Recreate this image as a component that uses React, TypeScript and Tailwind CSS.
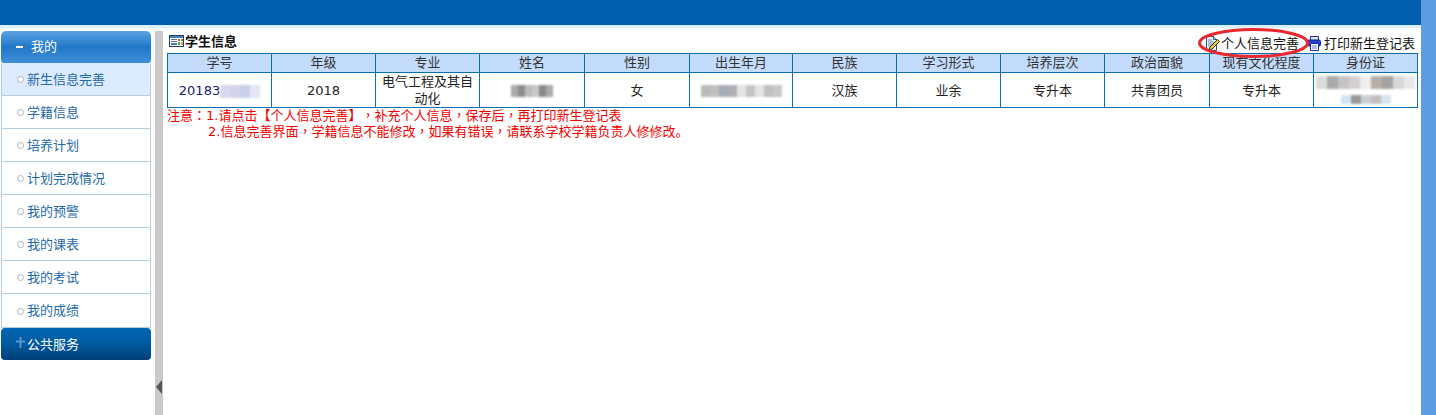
const menu = ["新生信息完善", "学籍信息", "培养计划", "计划完成情况", "我的预警", "我的课表", "我的考试", "我的成绩"];

const headers = ["学号", "年级", "专业", "姓名", "性别", "出生年月", "民族", "学习形式", "培养层次", "政治面貌", "现有文化程度", "身份证"];

const colWidths = [104, 104, 104, 105, 105, 103, 104, 104, 104, 105, 104, 104];

// pixelated bits of the screenshot, one string of colours per row
function Mosaic({ colors, size = 8, height = 13 }: { colors: string[]; size?: number; height?: number }) {
  return (
    <span className="inline-flex align-middle blur-[1px]">
      {colors.map((c, i) => (
        <span key={i} style={{ width: size, height, background: c }} />
      ))}
    </span>
  );
}

// the page's font centres ， and ： in their cell
function Notice({ text }: { text: string }) {
  return (
    <>
      {text.split(/([，：])/).map((part, i) =>
        part === "，" || part === "：" ? (
          <span key={i} className="font-['Noto_Sans_CJK_TC']">{part}</span>
        ) : (
          part
        ),
      )}
    </>
  );
}

function TableIcon() {
  return (
    <svg width="15" height="12" viewBox="0 0 15 12" className="shrink-0">
      <rect x="0.5" y="0.5" width="14" height="11" fill="#fff" stroke="#1f3f66" />
      <rect x="1" y="1" width="13" height="2" fill="#4a7fb8" />
      <rect x="2" y="4" width="6" height="1" fill="#4f78a8" />
      <rect x="2" y="6" width="6" height="1" fill="#4f78a8" />
      <rect x="2" y="8" width="6" height="2" fill="#4f78a8" />
      <rect x="9" y="4" width="2" height="2" fill="#d9483b" />
      <rect x="12" y="4" width="2" height="2" fill="#3fa34d" />
      <rect x="9" y="7" width="2" height="3" fill="#3fa34d" />
      <rect x="12" y="7" width="2" height="3" fill="#e0b030" />
    </svg>
  );
}

function EditIcon() {
  return (
    <svg width="15" height="15" viewBox="0 0 15 15" className="shrink-0">
      <path d="M1.500 0.500h7l3 3v11h-10z" fill="#eef4fb" stroke="#34506f" />
      <path d="M8.500 0.500v3h3" fill="#bcd2e8" stroke="#34506f" />
      <path d="M3 4h4M3 6h6M3 8h5M3 10h3" stroke="#5f86ad" />
      <path d="M12.500 3.500l2 2-7.500 7.500-3 1 1-3z" fill="#f4c62e" stroke="#1f1f1f" strokeWidth="0.9" />
    </svg>
  );
}

function PrintIcon() {
  return (
    <svg width="14" height="15" viewBox="0 0 14 15" className="shrink-0">
      <path d="M3.500 0.500h8v4h-8z" fill="#dfe8ff" stroke="#1a2fb0" />
      <rect x="0.5" y="4" width="13" height="6" rx="1.500" fill="#2440d0" stroke="#12208c" />
      <path d="M3.500 7.500h8v7h-8z" fill="#fff" stroke="#1a2fb0" />
      <path d="M5 10h5M5 12h5" stroke="#5f78c8" />
    </svg>
  );
}

export default function App() {
  return (
    <div
      className="flex h-[415px] w-[1436px] overflow-hidden bg-white text-[13px] text-[#222] [text-spacing-trim:space-all]"
      style={{ fontFamily: '"DejaVu Sans", "Noto Sans CJK SC", sans-serif' }}
    >
      <div className="flex w-[1421px] flex-col">
        <div className="h-[25px] bg-[#005eac]" />
        <div className="h-[3px] bg-[#d9f1ff]" />

        <div className="flex flex-1">
          {/* left menu */}
          <div className="mt-[3px] ml-px w-[150px]">
            <div className="flex h-[32px] items-center rounded-t-[5px] rounded-b-[3px] bg-gradient-to-b from-[#5aa2e2] via-[#1f78c8] to-[#3f8fd8] pl-[15px] text-white">
              <span className="h-[2px] w-[7px] bg-white" />
              <span className="ml-[8px]">我的</span>
            </div>
            <div className="border-x border-b border-[#b4cde4]">
              {menu.map((item, i) => (
                <div
                  key={item}
                  className={`flex h-[33px] items-center border-b border-[#b4cde4] pt-px pl-[15px] text-[#1f6aa8] last:border-b-0 ${
                    i === 0 ? "bg-[#dcebfd]" : "bg-white"
                  }`}
                >
                  <span className="mr-[3px] size-[7px] rounded-full border border-[#aab4bc] bg-white" />
                  {item}
                </div>
              ))}
            </div>
            <div className="flex h-[32px] items-center rounded-[4px] bg-gradient-to-b from-[#0066b4] via-[#005a9f] to-[#003f78] pt-px pl-[15px] text-white">
              <svg width="9" height="11" viewBox="0 0 9 11" className="mb-[5px] shrink-0">
                <path d="M3.500 0h2v3.500H9v2H5.500V11h-2V5.500H0v-2h3.500z" fill="#5d94d0" />
              </svg>
              <span className="ml-[2px]">公共服务</span>
            </div>
          </div>

          {/* splitter */}
          <div className="mt-[3px] ml-[4px] flex w-[8px] items-end bg-[#c9c9c9] pb-[21px]">
            <span className="ml-px h-0 w-0 border-y-[7px] border-r-[6px] border-y-transparent border-r-[#555]" />
          </div>

          {/* content */}
          <div className="relative ml-[4px] w-[1251px]">
            <div className="flex h-[25px] items-end justify-between">
              <div className="mb-[2px] flex items-center gap-px pl-[2px] font-bold text-[#111]">
                <TableIcon />
                <span>学生信息</span>
              </div>
              <div className="flex items-center pr-[3px] text-[#111]">
                <EditIcon />
                <span className="ml-px">个人信息完善</span>
                <span className="ml-[8px]"><PrintIcon /></span>
                <span className="ml-[3px]">打印新生登记表</span>
              </div>
            </div>

            <table className="w-[1250px] table-fixed border-collapse border border-[#0a70ad] text-center">
              <colgroup>
                {colWidths.map((w, i) => (
                  <col key={i} style={{ width: w }} />
                ))}
              </colgroup>
              <thead>
                <tr className="h-[19px] bg-[#c3dcfb] leading-[18px] text-[#333]">
                  {headers.map((h) => (
                    <th key={h} className="border border-[#0a70ad] p-0 font-normal">{h}</th>
                  ))}
                </tr>
              </thead>
              <tbody>
                <tr className="h-[33px] leading-[17px]">
                  <td className="border border-[#0a70ad] p-0">
                    <span className="text-[#1a1a70]">20183</span>
                    <Mosaic colors={["#d8d8ee", "#d4d4ea", "#c6d0e8", "#e6e6f4"]} size={10} />
                  </td>
                  <td className="border border-[#0a70ad] p-0">2018</td>
                  <td className="border border-[#0a70ad] p-0 px-1">电气工程及其自动化</td>
                  <td className="border border-[#0a70ad] p-0">
                    <Mosaic colors={["#aaa", "#8d8d8d", "#bbb", "#c8c8c8", "#888", "#aaa"]} size={7} height={12} />
                  </td>
                  <td className="border border-[#0a70ad] p-0">女</td>
                  <td className="border border-[#0a70ad] p-0">
                    <Mosaic colors={["#bbb", "#c0c0c0", "#a8acb8", "#b0b0b0", "#e4e4e4", "#c4c4c4", "#e4e4e4", "#c0c0c0", "#c8c8c8"]} size={9} height={12} />
                  </td>
                  <td className="border border-[#0a70ad] p-0">汉族</td>
                  <td className="border border-[#0a70ad] p-0">业余</td>
                  <td className="border border-[#0a70ad] p-0">专升本</td>
                  <td className="border border-[#0a70ad] p-0">共青团员</td>
                  <td className="border border-[#0a70ad] p-0">专升本</td>
                  <td className="border border-[#0a70ad] p-0">
                    <div className="flex flex-col items-center gap-[6px]">
                      <Mosaic colors={["#dcdcdc", "#aaa", "#c4c4c4", "#d4d0d0", "#eee", "#b4b0a8", "#a4a4a4", "#d8d8d8", "#e8e8e8"]} size={11} height={13} />
                      <Mosaic colors={["#d4e4f0", "#999", "#c8d0d4", "#c0c0c0", "#d8e4ec"]} size={10} height={9} />
                    </div>
                  </td>
                </tr>
              </tbody>
            </table>

            <div className="-mt-px text-[#f00000]">
              <div className="h-[16px] leading-[16px]"><Notice text="注意：1.请点击【个人信息完善】，补充个人信息，保存后，再打印新生登记表" /></div>
              <div className="h-[16px] pl-[41px] leading-[16px]"><Notice text="2.信息完善界面，学籍信息不能修改，如果有错误，请联系学校学籍负责人修修改。" /></div>
            </div>

            {/* hand-drawn circle round the link */}
            <svg width="120" height="34" viewBox="0 0 120 34" className="pointer-events-none absolute top-0 left-[1028px]">
              <ellipse cx="58.500" cy="15" rx="54" ry="13.500" fill="none" stroke="#e8292f" strokeWidth="3" />
            </svg>
          </div>
        </div>
      </div>
      <div className="w-[15px] bg-[#5b9de0]" />
    </div>
  );
}
